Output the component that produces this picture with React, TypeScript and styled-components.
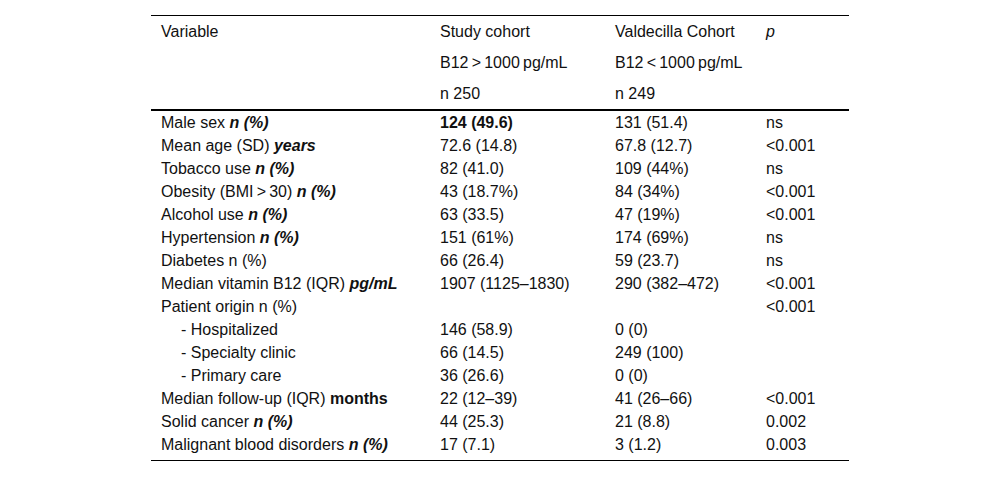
import React from "react";
import styled, { createGlobalStyle } from "styled-components";

const Global = createGlobalStyle`
  html, body { margin: 0; padding: 0; background: #fff; }
  body { font-family: "Liberation Sans", Arial, sans-serif; color: #111; }
`;

const Page = styled.div`
  padding-top: 15px;
  display: flex;
  justify-content: center;
`;

const Table = styled.div`
  width: 698px;
  border-top: 1px solid #000;
  border-bottom: 1px solid #000;
  font-size: 16px;
`;

const Head = styled.div`
  border-bottom: 2px solid #000;
`;

const Body = styled.div`
  padding-bottom: 4px;
`;

const Row = styled.div<{ $h: number }>`
  display: grid;
  grid-template-columns: 279px 175px 151px 93px;
  height: ${(p) => p.$h}px;
  line-height: ${(p) => p.$h}px;
`;

const Cell = styled.div<{ $indent?: boolean }>`
  padding-left: ${(p) => (p.$indent ? 30 : 10)}px;
  white-space: nowrap;
`;

const BI = styled.b`
  font-weight: bold;
  font-style: italic;
`;

const B = styled.b`
  font-weight: bold;
`;

const I = styled.i`
  font-style: italic;
`;

const nPct = <BI>n (%)</BI>;

type R = { v: React.ReactNode; a: React.ReactNode; b: React.ReactNode; p: string; indent?: boolean };

const rows: R[] = [
  { v: <>Male sex {nPct}</>, a: <B>124 (49.6)</B>, b: "131 (51.4)", p: "ns" },
  { v: <>Mean age (SD) <BI>years</BI></>, a: "72.6 (14.8)", b: "67.8 (12.7)", p: "<0.001" },
  { v: <>Tobacco use {nPct}</>, a: "82 (41.0)", b: "109 (44%)", p: "ns" },
  { v: <>Obesity (BMI{"\u2009>\u2009"}30) {nPct}</>, a: "43 (18.7%)", b: "84 (34%)", p: "<0.001" },
  { v: <>Alcohol use {nPct}</>, a: "63 (33.5)", b: "47 (19%)", p: "<0.001" },
  { v: <>Hypertension {nPct}</>, a: "151 (61%)", b: "174 (69%)", p: "ns" },
  { v: "Diabetes n (%)", a: "66 (26.4)", b: "59 (23.7)", p: "ns" },
  { v: <>Median vitamin B12 (IQR) <BI>pg/mL</BI></>, a: "1907 (1125–1830)", b: "290 (382–472)", p: "<0.001" },
  { v: "Patient origin n (%)", a: "", b: "", p: "<0.001" },
  { v: "- Hospitalized", a: "146 (58.9)", b: "0 (0)", p: "", indent: true },
  { v: "- Specialty clinic", a: "66 (14.5)", b: "249 (100)", p: "", indent: true },
  { v: "- Primary care", a: "36 (26.6)", b: "0 (0)", p: "", indent: true },
  { v: <>Median follow-up (IQR) <B>months</B></>, a: "22 (12–39)", b: "41 (26–66)", p: "<0.001" },
  { v: <>Solid cancer {nPct}</>, a: "44 (25.3)", b: "21 (8.8)", p: "0.002" },
  { v: <>Malignant blood disorders {nPct}</>, a: "17 (7.1)", b: "3 (1.2)", p: "0.003" },
];

export default function App() {
  return (
    <>
      <Global />
      <Page>
        <Table>
          <Head>
            <Row $h={31}>
              <Cell>Variable</Cell>
              <Cell>Study cohort</Cell>
              <Cell>Valdecilla Cohort</Cell>
              <Cell>
                <I>p</I>
              </Cell>
            </Row>
            <Row $h={31}>
              <Cell />
              <Cell>B12{"\u2009>\u2009"}1000{"\u2009"}pg/mL</Cell>
              <Cell>B12{"\u2009<\u2009"}1000{"\u2009"}pg/mL</Cell>
              <Cell />
            </Row>
            <Row $h={31}>
              <Cell />
              <Cell>n 250</Cell>
              <Cell>n 249</Cell>
              <Cell />
            </Row>
          </Head>
          <Body>
            {rows.map((r, i) => (
              <Row $h={23} key={i}>
                <Cell $indent={r.indent}>{r.v}</Cell>
                <Cell>{r.a}</Cell>
                <Cell>{r.b}</Cell>
                <Cell>{r.p}</Cell>
              </Row>
            ))}
          </Body>
        </Table>
      </Page>
    </>
  );
}
